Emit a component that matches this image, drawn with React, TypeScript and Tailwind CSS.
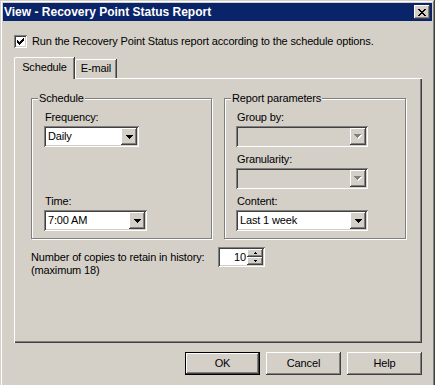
import React from "react";

const sunken =
  "shadow-[inset_1px_1px_#808080,inset_-1px_-1px_#ffffff,inset_2px_2px_#404040,inset_-2px_-2px_#d4d0c8]";
const raised =
  "shadow-[inset_-1px_-1px_#404040,inset_1px_1px_#ffffff,inset_-2px_-2px_#808080,inset_2px_2px_#d4d0c8]";
const frame =
  "shadow-[inset_-1px_-1px_#404040,inset_1px_1px_#d4d0c8,inset_-2px_-2px_#808080,inset_2px_2px_#ffffff]";

function Pix({ w, h, rows, color }: { w: number; h: number; rows: [number, number, number][]; color: string }) {
  return (
    <svg width={w} height={h} shapeRendering="crispEdges" className="block">
      {rows.map(([x, y, len], i) => (
        <rect key={i} x={x} y={y} width={len} height={1} fill={color} />
      ))}
    </svg>
  );
}

const downRows: [number, number, number][] = [
  [0, 0, 7],
  [1, 1, 5],
  [2, 2, 3],
  [3, 3, 1],
];

function DownArrow({ disabled }: { disabled?: boolean }) {
  if (disabled) {
    const white = downRows.map(([x, y, l]) => [x + 1, y + 1, l] as [number, number, number]);
    return (
      <svg width={8} height={5} shapeRendering="crispEdges" className="block">
        {white.map(([x, y, l], i) => (
          <rect key={"w" + i} x={x} y={y} width={l} height={1} fill="#ffffff" />
        ))}
        {downRows.map(([x, y, l], i) => (
          <rect key={"g" + i} x={x} y={y} width={l} height={1} fill="#808080" />
        ))}
      </svg>
    );
  }
  return <Pix w={7} h={4} rows={downRows} color="#000000" />;
}

function Combo({ text, width, disabled }: { text?: string; width: string; disabled?: boolean }) {
  return (
    <div className={`${width} h-[21px] p-[2px] flex ${sunken} ${disabled ? "bg-[#d4d0c8]" : "bg-white"}`}>
      <div className="flex-1 pl-[2px] leading-[17px] whitespace-nowrap">{text}</div>
      <div className={`w-[16px] h-[17px] bg-[#d4d0c8] flex items-center justify-center ${raised}`}>
        <DownArrow disabled={disabled} />
      </div>
    </div>
  );
}

function Group({ title, width, pad, children }: { title: string; width: string; pad: string; children: React.ReactNode }) {
  return (
    <div
      className={`relative ${width} h-[141px] border border-[#808080] shadow-[inset_1px_1px_#ffffff,1px_1px_#ffffff] pt-[12px] ${pad}`}
    >
      <span className="absolute left-[6px] top-[-7px] px-[1px] bg-[#d4d0c8] leading-[13px]">{title}</span>
      {children}
    </div>
  );
}

function Label({ children, className = "" }: { children: React.ReactNode; className?: string }) {
  return <div className={`pl-[1px] leading-[13px] h-[13px] ${className}`}>{children}</div>;
}

function Button({ label, def }: { label: string; def?: boolean }) {
  if (def) {
    return (
      <div className="w-[75px] h-[23px] border border-black">
        <div className={`w-full h-full flex items-center justify-center ${raised}`}>{label}</div>
      </div>
    );
  }
  return <div className={`w-[75px] h-[23px] flex items-center justify-center ${raised}`}>{label}</div>;
}

export default function App() {
  const check: [number, number, number][] = [
    [6, 0, 1],
    [5, 1, 2],
    [0, 2, 1],
    [4, 2, 3],
    [0, 3, 2],
    [3, 3, 3],
    [0, 4, 5],
    [1, 5, 3],
    [2, 6, 1],
  ];
  const closeX: [number, number, number][] = [
    [0, 0, 2],
    [6, 0, 2],
    [1, 1, 2],
    [5, 1, 2],
    [2, 2, 4],
    [3, 3, 2],
    [2, 4, 4],
    [1, 5, 2],
    [5, 5, 2],
    [0, 6, 2],
    [6, 6, 2],
  ];
  const spinUp: [number, number, number][] = [
    [1, 0, 1],
    [0, 1, 3],
  ];
  const spinDown: [number, number, number][] = [
    [0, 0, 3],
    [1, 1, 1],
  ];

  return (
    <div className="w-[435px] h-[385px] overflow-hidden bg-[#d4d0c8] text-[11px] tracking-[-0.15px] text-black font-['Liberation_Sans',Arial,sans-serif]">
      <div className={`w-[435px] h-[400px] p-[3px] ${frame}`}>
        {/* Title bar */}
        <div className="h-[18px] bg-[#0a246a] flex items-center justify-between pl-[1px] pr-[2px]">
          <span className="text-white font-bold text-[12px] tracking-normal leading-[18px]">
            View - Recovery Point Status Report
          </span>
          <div className={`w-[16px] h-[14px] bg-[#d4d0c8] flex items-center justify-center ${raised}`}>
            <Pix w={8} h={7} rows={closeX} color="#000000" />
          </div>
        </div>

        <div className="pl-[11px]">
          {/* Checkbox row */}
          <div className="mt-[14px] h-[13px] flex items-center">
            <div className={`w-[13px] h-[13px] bg-white flex items-center justify-center ${sunken}`}>
              <Pix w={7} h={7} rows={check} color="#000000" />
            </div>
            <span className="ml-[5px] leading-[13px]">
              Run the Recovery Point Status report according to the schedule options.
            </span>
          </div>

          {/* Tabs */}
          <div className="mt-[9px] h-[21px] flex items-end">
            <div className="relative z-10 w-[60px] h-[22px] -mb-[1px] bg-[#d4d0c8] border-l border-t border-white rounded-tl-[2px] shadow-[inset_-1px_0_#808080,1px_0_#404040] flex justify-center pt-[3px] leading-[13px]">
              Schedule
            </div>
            <div className="w-[41px] h-[19px] ml-[1px] border-l border-t border-white rounded-tl-[2px] shadow-[inset_-1px_0_#808080,1px_0_#404040] flex justify-center pt-[2px] leading-[13px]">
              E-mail
            </div>
          </div>

          {/* Tab panel */}
          <div className="w-[408px] h-[265px] shadow-[inset_1px_1px_#ffffff,inset_-1px_-1px_#404040,inset_-2px_-2px_#808080] pl-[17px] pt-[20px]">
            <div className="flex gap-[12px]">
              <Group title="Schedule" width="w-[181px]" pad="pl-[12px]">
                <Label>Frequency:</Label>
                <div className="mt-[2px]">
                  <Combo text="Daily" width="w-[95px]" />
                </div>
                <Label className="mt-[48px]">Time:</Label>
                <div className="mt-[2px]">
                  <Combo text="7:00 AM" width="w-[103px]" />
                </div>
              </Group>
              <Group title="Report parameters" width="w-[182px]" pad="pl-[11px]">
                <Label>Group by:</Label>
                <div className="mt-[2px]">
                  <Combo width="w-[132px]" disabled />
                </div>
                <Label className="mt-[6px]">Granularity:</Label>
                <div className="mt-[2px]">
                  <Combo width="w-[132px]" disabled />
                </div>
                <Label className="mt-[6px]">Content:</Label>
                <div className="mt-[2px]">
                  <Combo text="Last 1 week" width="w-[132px]" />
                </div>
              </Group>
            </div>

            <div className="mt-[8px] flex items-start">
              <div className="w-[187px] mt-[4px] leading-[13px]">
                <div>Number of copies to retain in history:</div>
                <div>(maximum 18)</div>
              </div>
              <div className={`w-[47px] h-[20px] bg-white p-[2px] flex ${sunken}`}>
                <div className="flex-1 text-right pr-[1px] leading-[16px]">10</div>
                <div className="w-[16px] flex flex-col">
                  <div className={`h-[8px] bg-[#d4d0c8] flex items-center justify-center ${raised}`}>
                    <Pix w={3} h={2} rows={spinUp} color="#000000" />
                  </div>
                  <div className={`h-[8px] bg-[#d4d0c8] flex items-center justify-center ${raised}`}>
                    <Pix w={3} h={2} rows={spinDown} color="#000000" />
                  </div>
                </div>
              </div>
            </div>
          </div>

          {/* Buttons */}
          <div className="w-[408px] mt-[9px] flex justify-end gap-[6px]">
            <Button label="OK" def />
            <Button label="Cancel" />
            <Button label="Help" />
          </div>
        </div>
      </div>
    </div>
  );
}
